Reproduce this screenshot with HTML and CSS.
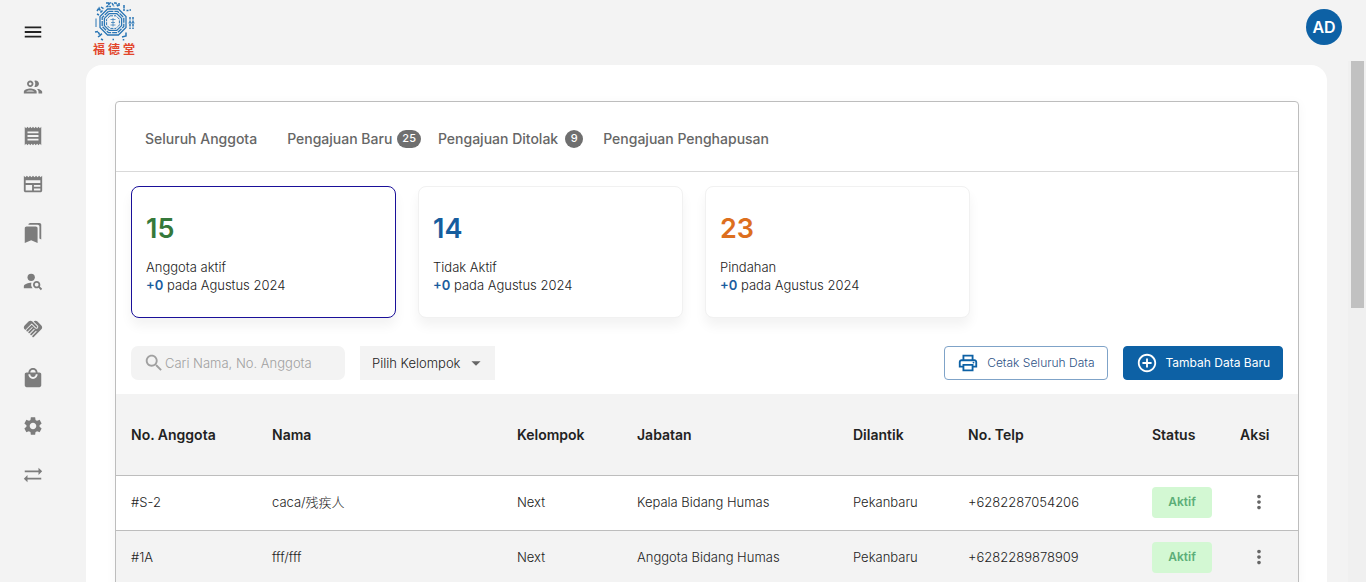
FILE: index.html
```html
<!DOCTYPE html>
<html lang="id">
<head>
<meta charset="utf-8">
<meta name="viewport" content="width=device-width, initial-scale=1">
<title>Anggota</title>
<link rel="stylesheet" href="styles.css">
</head>
<body>
<div class="app">
  <aside class="sidebar">
    <button class="menu-button" type="button" aria-label="Menu"><svg class="icon" viewBox="0 0 24 24"><path d="M3 18h18v-2H3v2zm0-5h18v-2H3v2zm0-7v2h18V6H3z"/></svg></button>
    <nav class="side-nav" aria-label="Navigasi">
      <a href="#" aria-label="Anggota"><svg class="icon" viewBox="0 0 24 24"><path d="M9 13.75c-2.34 0-7 1.17-7 3.5V19h14v-1.75c0-2.33-4.66-3.5-7-3.5zM4.34 17c.84-.58 2.87-1.25 4.66-1.25s3.82.67 4.66 1.25H4.34zM9 12c1.93 0 3.5-1.57 3.5-3.5S10.93 5 9 5 5.5 6.57 5.5 8.5 7.07 12 9 12zm0-5c.83 0 1.5.67 1.5 1.5S9.83 10 9 10s-1.5-.67-1.5-1.5S8.17 7 9 7zm7.04 6.81c1.16.84 1.96 1.96 1.96 3.44V19h4v-1.75c0-2.02-3.5-3.17-5.96-3.44zM15 12c1.93 0 3.5-1.57 3.5-3.5S16.93 5 15 5c-.54 0-1.04.13-1.5.35.63.89 1 1.98 1 3.15s-.37 2.26-1 3.15c.46.22.96.35 1.5.35z"/></svg></a>
      <a href="#" aria-label="Kuitansi"><svg class="icon" viewBox="0 0 24 24"><path d="M18 17H6v-2h12v2zm0-4H6v-2h12v2zm0-4H6V7h12v2zM3 22l1.5-1.5L6 22l1.5-1.5L9 22l1.5-1.5L12 22l1.5-1.5L15 22l1.5-1.5L18 22l1.5-1.5L21 22V2l-1.5 1.5L18 2l-1.5 1.5L15 2l-1.5 1.5L12 2l-1.5 1.5L9 2 7.5 3.5 6 2 4.5 3.5 3 2v20z"/></svg></a>
      <a href="#" aria-label="Berita"><svg class="icon" viewBox="0 0 24 24"><path d="M22 3l-1.67 1.67L18.67 3 17 4.67 15.33 3l-1.66 1.67L12 3l-1.67 1.67L8.67 3 7 4.67 5.33 3 3.67 4.67 2 3v16c0 1.1.9 2 2 2h16c1.1 0 2-.9 2-2V3zM11 19H4v-6h7v6zm9 0h-7v-2h7v2zm0-4h-7v-2h7v2zm0-4H4V8h16v3z"/></svg></a>
      <a href="#" aria-label="Penanda"><svg class="icon" viewBox="0 0 24 24"><path d="M19 18l2 1V3c0-1.1-.9-2-2-2H8.99C7.89 1 7 1.9 7 3h10c1.1 0 2 .9 2 2v13zM15 5H5c-1.1 0-2 .9-2 2v16l7-3 7 3V7c0-1.1-.9-2-2-2z"/></svg></a>
      <a href="#" aria-label="Cari anggota"><svg class="icon" viewBox="0 0 24 24"><circle cx="10" cy="8" r="4"/><path d="M10.35 14.01C7.62 13.91 2 15.27 2 18v2h9.54c-2.47-2.76-1.23-5.89-1.19-5.99zM19.43 18.02c.36-.59.57-1.28.57-2.02 0-2.21-1.79-4-4-4s-4 1.79-4 4 1.79 4 4 4c.74 0 1.43-.22 2.02-.57L20.59 22 22 20.59l-2.57-2.57zM16 18c-1.1 0-2-.9-2-2s.9-2 2-2 2 .9 2 2-.9 2-2 2z"/></svg></a>
      <a href="#" aria-label="Donasi"><svg class="icon" viewBox="0 0 24 24"><path d="M16.48 10.41c-.39.39-1.04.39-1.43 0l-4.47-4.46-7.05 7.04-.66-.63c-1.17-1.17-1.17-3.07 0-4.24l4.24-4.24c1.17-1.17 3.07-1.17 4.24 0L16.48 9c.39.39.39 1.02 0 1.41zm.7-2.12c.78.78.78 2.05 0 2.83-1.27 1.27-2.61.22-2.83 0l-3.76-3.76-5.57 5.57c-.39.39-.39 1.02 0 1.41.39.39 1.02.39 1.42 0l4.62-4.62.71.71-4.62 4.62c-.39.39-.39 1.02 0 1.41.39.39 1.02.39 1.42 0l4.62-4.62.71.71-4.62 4.62c-.39.39-.39 1.02 0 1.41.39.39 1.02.39 1.41 0l4.62-4.62.71.71-4.62 4.62c-.39.39-.39 1.02 0 1.41.39.39 1.02.39 1.41 0l8.32-8.34c1.17-1.17 1.17-3.07 0-4.24l-4.24-4.24c-1.15-1.15-3.01-1.17-4.18-.06l4.47 4.47z"/></svg></a>
      <a href="#" aria-label="Belanja"><svg class="icon" viewBox="0 0 24 24"><path d="M19 6h-2c0-2.76-2.24-5-5-5S7 3.24 7 6H5c-1.1 0-1.99.9-1.99 2L3 20c0 1.1.9 2 2 2h14c1.1 0 2-.9 2-2V8c0-1.1-.9-2-2-2zm-7-3c1.66 0 3 1.34 3 3H9c0-1.66 1.34-3 3-3zm0 10c-2.76 0-5-2.24-5-5h2c0 1.66 1.34 3 3 3s3-1.34 3-3h2c0 2.76-2.24 5-5 5z"/></svg></a>
      <a href="#" aria-label="Pengaturan"><svg class="icon" viewBox="0 0 24 24"><path d="M19.14 12.94c.04-.3.06-.61.06-.94 0-.32-.02-.64-.07-.94l2.03-1.58c.18-.14.23-.41.12-.61l-1.92-3.32c-.12-.22-.37-.29-.59-.22l-2.39.96c-.5-.38-1.03-.7-1.62-.94l-.36-2.54c-.04-.24-.24-.41-.48-.41h-3.84c-.24 0-.43.17-.47.41l-.36 2.54c-.59.24-1.13.57-1.62.94l-2.39-.96c-.22-.08-.47 0-.59.22L2.74 8.87c-.12.21-.08.47.12.61l2.03 1.58c-.05.3-.09.63-.09.94s.02.64.07.94l-2.03 1.58c-.18.14-.23.41-.12.61l1.92 3.32c.12.22.37.29.59.22l2.39-.96c.5.38 1.03.7 1.62.94l.36 2.54c.05.24.24.41.48.41h3.84c.24 0 .44-.17.47-.41l.36-2.54c.59-.24 1.13-.56 1.62-.94l2.39.96c.22.08.47 0 .59-.22l1.92-3.32c.12-.22.07-.47-.12-.61l-2.01-1.58zM12 15.6c-1.98 0-3.6-1.62-3.6-3.6s1.62-3.6 3.6-3.6 3.6 1.62 3.6 3.6-1.62 3.6-3.6 3.6z"/></svg></a>
      <a href="#" aria-label="Mutasi"><svg class="icon" viewBox="0 0 24 24"><path d="m18 12 4-4-4-4v3H3v2h15zM6 12l-4 4 4 4v-3h15v-2H6z"/></svg></a>
    </nav>
  </aside>

  <div class="page">
    <header class="topbar">
      <div class="brand">
        <svg class="brand-mark" viewBox="0 0 42 42" fill="none" stroke="#2a76b5">
          <g stroke-width="1.3">
            <path d="M14.600 8h10.800l7.600 7.600v10.800l-7.600 7.600H14.600L7 26.400V15.600z"/>
            <path d="M15.400 10.400h9.200l6.200 6.200v8.800l-6.200 6.200h-9.200l-6.200-6.200v-8.800z" stroke-dasharray="5 1"/>
            <path d="M16.200 12.600h7.600l4.800 4.800v7.200l-4.800 4.800h-7.600l-4.800-4.800v-7.200z"/>
            <path d="M17 14.800h6l3.400 3.400v5.800L23 27.400h-6L13.600 24v-5.800z" stroke-dasharray="3 1" stroke-width="1"/>
          </g>
          <path d="M17.500 18.500h5M20 17v8.500M18 21.500h4M17.500 24h5" stroke-width="1" opacity=".7"/>
          <g stroke-width="1.5">
            <path d="M13 2h4l-3 3.500h4M19 2l2 3.500M21 2h2l2 3.500M26 2v3.500M31 4v6M33.500 9.500h2M36.500 9h1.500" stroke-dasharray="3 .6"/>
            <path d="M4 10l2-3 2 4 2-2M8 6l3 2M4 13l2 1" stroke-dasharray="3 .6"/>
            <path d="M3 17.500v8.500" stroke-width="1"/>
            <path d="M37 16v12M40 16v12" stroke-dasharray="2.500 1"/>
            <path d="M35.500 22h6" stroke-width="1"/>
            <path d="M2 31l3-.5 2 4 2-2M5 36l2-1.500M8 38l2 1" stroke-dasharray="3 .6"/>
            <path d="M29 36l4-1v-3.500M30.500 38v1.500M19.500 38.500h1.500"/>
          </g>
        </svg>
        <span class="brand-name" lang="zh-Hant"><span>福</span><span>德</span><span>堂</span></span>
      </div>
      <button class="avatar" type="button">AD</button>
    </header>

    <div class="viewport">
      <main class="sheet">
        <section class="panel">
          <nav class="tabs">
            <a class="tab tab-first" href="#">Seluruh Anggota</a>
            <a class="tab tab-new" href="#">Pengajuan Baru<span class="badge">25</span></a>
            <a class="tab tab-rejected" href="#">Pengajuan Ditolak<span class="badge">9</span></a>
            <a class="tab" href="#">Pengajuan Penghapusan</a>
          </nav>

          <div class="stats">
            <article class="stat stat-selected">
              <strong class="stat-value green">15</strong>
              <p>Anggota aktif</p>
              <p><b>+0</b> pada Agustus 2024</p>
            </article>
            <article class="stat">
              <strong class="stat-value blue">14</strong>
              <p>Tidak Aktif</p>
              <p><b>+0</b> pada Agustus 2024</p>
            </article>
            <article class="stat">
              <strong class="stat-value orange">23</strong>
              <p>Pindahan</p>
              <p><b>+0</b> pada Agustus 2024</p>
            </article>
          </div>

          <div class="toolbar">
            <label class="search">
              <svg class="icon" viewBox="0 0 24 24"><path d="M15.5 14h-.79l-.28-.27C15.41 12.590 16 11.110 16 9.500 16 5.910 13.090 3 9.500 3S3 5.910 3 9.500 5.910 16 9.500 16c1.610 0 3.090-.59 4.230-1.570l.27.28v.79l5 4.990L20.490 19l-4.990-5zm-6 0C7.010 14 5 11.990 5 9.500S7.010 5 9.500 5 14 7.010 14 9.500 11.990 14 9.500 14z"/></svg>
              <input type="text" placeholder="Cari Nama, No. Anggota" aria-label="Cari Nama, No. Anggota">
            </label>
            <div class="group-filter">
              <select aria-label="Kelompok"><option>Pilih Kelompok</option><option>Next</option></select>
              <svg class="icon" viewBox="0 0 24 24"><path d="m7 10 5 5 5-5z"/></svg>
            </div>
            <div class="actions">
              <button class="button button-outline" type="button"><svg class="icon" viewBox="0 0 24 24"><path d="M19 8h-1V3H6v5H5c-1.660 0-3 1.340-3 3v6h4v4h12v-4h4v-6c0-1.660-1.340-3-3-3zM8 5h8v3H8V5zm8 12v2H8v-4h8v2zm2-2v-2H6v2H4v-4c0-.55.45-1 1-1h14c.55 0 1 .45 1 1v4h-2z"/><circle cx="18" cy="11.500" r="1"/></svg>Cetak Seluruh Data</button>
              <button class="button button-primary" type="button"><svg class="icon" viewBox="0 0 24 24"><path d="M13 7h-2v4H7v2h4v4h2v-4h4v-2h-4V7zm-1-5C6.480 2 2 6.480 2 12s4.480 10 10 10 10-4.480 10-10S17.520 2 12 2zm0 18c-4.410 0-8-3.590-8-8s3.590-8 8-8 8 3.590 8 8-3.590 8-8 8z"/></svg>Tambah Data Baru</button>
            </div>
          </div>

          <table class="members">
            <colgroup>
              <col class="col-id"><col><col class="col-group"><col class="col-role"><col class="col-place"><col class="col-phone"><col class="col-status"><col class="col-action">
            </colgroup>
            <thead>
              <tr><th>No. Anggota</th><th>Nama</th><th>Kelompok</th><th>Jabatan</th><th>Dilantik</th><th>No. Telp</th><th>Status</th><th>Aksi</th></tr>
            </thead>
            <tbody>
              <tr>
                <td>#S-2</td><td>caca/残疾人</td><td>Next</td><td>Kepala Bidang Humas</td><td>Pekanbaru</td><td>+6282287054206</td>
                <td><span class="status">Aktif</span></td>
                <td><button class="more" type="button" aria-label="Aksi #S-2"><svg class="icon" viewBox="0 0 24 24"><path d="M12 8c1.100 0 2-.9 2-2s-.9-2-2-2-2 .9-2 2 .9 2 2 2zm0 2c-1.100 0-2 .9-2 2s.9 2 2 2 2-.9 2-2-.9-2-2-2zm0 6c-1.100 0-2 .9-2 2s.9 2 2 2 2-.9 2-2-.9-2-2-2z"/></svg></button></td>
              </tr>
              <tr>
                <td>#1A</td><td>fff/fff</td><td>Next</td><td>Anggota Bidang Humas</td><td>Pekanbaru</td><td>+6282289878909</td>
                <td><span class="status">Aktif</span></td>
                <td><button class="more" type="button" aria-label="Aksi #1A"><svg class="icon" viewBox="0 0 24 24"><path d="M12 8c1.100 0 2-.9 2-2s-.9-2-2-2-2 .9-2 2 .9 2 2 2zm0 2c-1.100 0-2 .9-2 2s.9 2 2 2 2-.9 2-2-.9-2-2-2zm0 6c-1.100 0-2 .9-2 2s.9 2 2 2 2-.9 2-2-.9-2-2-2z"/></svg></button></td>
              </tr>
            </tbody>
          </table>
        </section>
      </main>
      <div class="scroll-track" aria-hidden="true"><div class="scroll-thumb"></div></div>
    </div>
  </div>
</div>
</body>
</html>
```
FILE: styles.css
```css
* {
  box-sizing: border-box;
}

body {
  margin: 0;
  background: #f3f3f3;
  color: #222;
  font-family: Inter, "Noto Sans CJK SC", sans-serif;
  font-size: 13px;
  font-weight: 300;
  line-height: 18px;
}

a {
  color: inherit;
  text-decoration: none;
}

button,
input,
select {
  margin: 0;
  padding: 0;
  border: 0;
  background: none;
  color: inherit;
  font: inherit;
}

.icon {
  display: block;
  flex: none;
  width: 22px;
  height: 22px;
  fill: currentColor;
}

.app {
  display: flex;
  height: 100vh;
  overflow: hidden;
}

.sidebar {
  flex: none;
  width: 65px;
}

.menu-button {
  display: grid;
  place-items: center;
  width: 100%;
  height: 63px;
  color: #222;
}

.side-nav {
  display: grid;
  grid-template-rows: repeat(9, 1fr);
  height: 436px;
  color: #7c7c7c;
}

.side-nav a {
  display: grid;
  place-items: center;
}

.page {
  display: flex;
  flex: 1;
  flex-direction: column;
  min-width: 0;
}

.topbar {
  display: flex;
  flex: none;
  justify-content: space-between;
  height: 61px;
  padding: 0 24px 0 28px;
}

.brand {
  display: flex;
  flex-direction: column;
  align-items: center;
  padding-top: 1px;
}

.brand-mark {
  width: 42px;
  height: 42px;
}

.brand-name {
  display: flex;
  gap: 3px;
  color: #e2452b;
  font-family: "Noto Sans CJK TC", sans-serif;
  font-size: 12px;
  font-weight: 700;
  line-height: 12px;
}

.avatar {
  width: 36px;
  height: 36px;
  margin-top: 9px;
  border-radius: 50%;
  background: #0d61a5;
  color: #fff;
  font-size: 16px;
  font-weight: 600;
}

.viewport {
  display: flex;
  flex: 1;
  min-height: 0;
}

.sheet {
  flex: 1;
  align-self: flex-start;
  min-width: 0;
  margin: 4px 21px 0;
  padding: 36px 28px;
  border-radius: 16px;
  background: #fff;
}

.scroll-track {
  flex: none;
  width: 18px;
  padding: 0 2px 0 3px;
  background: #f0f0f0;
}

.scroll-thumb {
  height: 247px;
  background: #c1c1c1;
}

.panel {
  margin-left: 1px;
  border: 1px solid #bdbdbd;
  border-radius: 4px;
  box-shadow: 0 2px 12px rgba(0, 0, 0, 0.04);
}

.tabs {
  display: flex;
  align-items: center;
  height: 70px;
  padding: 4px 29px 0;
  border-bottom: 1px solid #d9d9d9;
  color: #666;
  font-size: 14px;
  font-weight: 500;
}

.tab {
  display: flex;
  align-items: center;
}

.tab-first {
  margin-right: 30px;
}

.tab-new {
  margin-right: 17px;
}

.tab-rejected {
  margin-right: 20px;
}

.badge {
  min-width: 18px;
  height: 18px;
  margin-left: 5px;
  padding: 0 5px;
  border-radius: 9px;
  background: #6f6f6f;
  color: #fff;
  font-size: 11px;
  line-height: 16px;
  text-align: center;
}

.tab-rejected .badge {
  margin-left: 7px;
}

.stats {
  display: flex;
  gap: 22px;
  padding: 14px 15px 0;
}

.stat {
  flex: 0 1 265px;
  height: 132px;
  padding: 25px 14px;
  border: 1px solid #f1f1f1;
  border-radius: 8px;
  background: #fff;
  box-shadow: 0 8px 12px rgba(0, 0, 0, 0.05);
}

.stat-selected {
  border-color: #1a1099;
}

.stat p {
  margin: 0;
}

.stat b {
  color: #1a5c9e;
  font-weight: 600;
}

.stat-value {
  display: block;
  margin-bottom: 12px;
  font-size: 27px;
  font-weight: 600;
  line-height: 34px;
}

.green {
  color: #35793b;
}

.blue {
  color: #165d9e;
}

.orange {
  color: #dd6f1e;
}

.toolbar {
  display: flex;
  gap: 15px;
  padding: 28px 15px 14px;
}

.search {
  display: flex;
  align-items: center;
  width: 214px;
  height: 34px;
  padding: 0 12px;
  border-radius: 7px;
  background: #f3f3f3;
  color: #a0a0a0;
}

.search input {
  flex: 1;
  min-width: 0;
  outline: 0;
}

.search input::placeholder {
  color: #a0a0a0;
  opacity: 1;
}

.group-filter {
  display: grid;
  align-items: center;
  width: 135px;
  height: 34px;
  background: #f3f3f3;
}

.group-filter select,
.group-filter .icon {
  grid-area: 1 / 1;
}

.group-filter select {
  width: 100%;
  height: 100%;
  padding: 0 32px 0 12px;
  appearance: none;
}

.group-filter .icon {
  justify-self: end;
  margin-right: 8px;
  color: #666;
  pointer-events: none;
}

.actions {
  display: flex;
  gap: 15px;
  margin-left: auto;
}

.button {
  display: flex;
  align-items: center;
  gap: 8px;
  height: 34px;
  padding: 0 12px;
  border: 1px solid #0d61a5;
  border-radius: 4px;
  font-size: 12px;
}

.button-outline {
  border-color: #7fa3c8;
  color: #2d5285;
}

.button-outline .icon {
  color: #0d61a5;
}

.button-primary {
  background: #0d61a5;
  color: #fff;
  font-weight: 400;
}

.members {
  width: 100%;
  border-spacing: 0;
  table-layout: fixed;
}

.col-id {
  width: 141px;
}

.col-group {
  width: 120px;
}

.col-role {
  width: 216px;
}

.col-place {
  width: 115px;
}

.col-phone {
  width: 184px;
}

.col-status {
  width: 88px;
}

.col-action {
  width: 73px;
}

.members th,
.members td {
  padding: 0 0 0 15px;
  border-bottom: 1px solid #bdbdbd;
  text-align: left;
}

.members th {
  height: 82px;
  background: #f3f3f3;
  color: #222;
  font-size: 14px;
  font-weight: 600;
}

.members td {
  height: 55px;
  padding-bottom: 2px;
}

.members tbody tr:nth-child(even) {
  background: #f3f3f3;
}

.status {
  display: grid;
  place-items: center;
  width: 60px;
  height: 31px;
  border-radius: 4px;
  background: #d3f8d3;
  color: #5cae78;
  font-size: 12px;
  font-weight: 600;
}

.more {
  display: block;
  margin-left: 8px;
  color: #666;
}
```
